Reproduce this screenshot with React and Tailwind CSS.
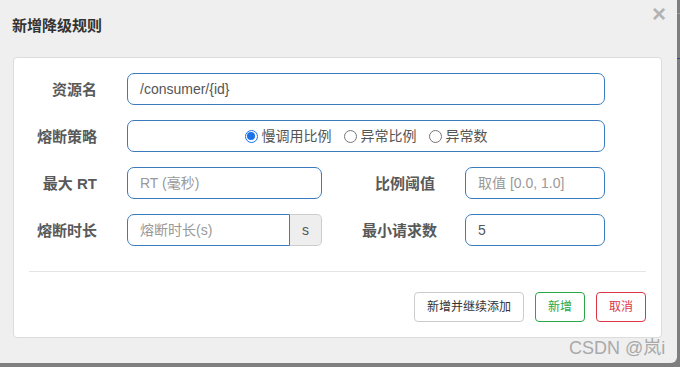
import React from 'react';

const font = { fontFamily: '"Liberation Sans", "Noto Sans CJK SC", sans-serif' };

/* ---------- little helpers ---------- */

function Label({ children, className = '' }) {
  return (
    <label className={`text-right text-[15px] font-bold text-[#595959] leading-none ${className}`}>
      {children}
    </label>
  );
}

function Input({ value, placeholder, className = '' }) {
  return (
    <div
      className={`h-[32px] border border-[#3a7cbd] rounded-[7px] px-[12px] flex items-center text-[14px] ${className}`}
    >
      {value ? (
        <span className="text-[#555]">{value}</span>
      ) : (
        <span className="text-[#999]">{placeholder}</span>
      )}
    </div>
  );
}

function Radio({ checked, children }) {
  return (
    <label className="flex items-center gap-[4px] text-[14px] text-[#555]">
      {checked ? (
        <span className="w-[13px] h-[13px] rounded-full border border-[#1a73e8] flex items-center justify-center">
          <span className="w-[8px] h-[8px] rounded-full bg-[#1a73e8]" />
        </span>
      ) : (
        <span className="w-[13px] h-[13px] rounded-full border border-[#767676] bg-white" />
      )}
      {children}
    </label>
  );
}

/* ---------- page ---------- */

export default function App() {
  return (
    <div className="w-[680px] h-[367px] bg-[#7f7f7f] relative overflow-hidden" style={font}>
      {/* bits of the page behind the overlay */}
      <div className="absolute right-0 top-[13px] w-[3px] h-px bg-[#9a9a9a]" />
      <div className="absolute right-0 top-[58px] w-[3px] h-px bg-[#2f4f78]" />

      <div className="w-[677px] h-[363px] bg-[#efefef] rounded-br-[6px] relative">
        {/* header */}
        <div className="h-[50px] flex items-center pl-[12px]">
          <h4 className="text-[15px] font-bold text-[#333] leading-none">新增降级规则</h4>
        </div>
        <button className="absolute right-[11px] top-[2px] text-[24px] font-bold leading-none text-[#b3b3b3]">
          ×
        </button>

        {/* body */}
        <div className="mt-[7px] ml-[13px] w-[649px] h-[281px] bg-white border border-[#dcdcdc] rounded-[4px] pt-[15px] px-[15px]">
          <div className="flex flex-col gap-[15px]">
            {/* 资源名 */}
            <div className="flex items-center">
              <Label className="w-[68px]">资源名</Label>
              <Input value="/consumer/{id}" className="ml-[30px] w-[478px]" />
            </div>

            {/* 熔断策略 */}
            <div className="flex items-center">
              <Label className="w-[68px]">熔断策略</Label>
              <div className="ml-[30px] w-[478px] h-[32px] border border-[#3a7cbd] rounded-[7px] flex items-center justify-center gap-[12px]">
                <Radio checked>慢调用比例</Radio>
                <Radio>异常比例</Radio>
                <Radio>异常数</Radio>
              </div>
            </div>

            {/* 最大 RT / 比例阈值 */}
            <div className="flex items-center">
              <Label className="w-[68px]">最大 RT</Label>
              <Input placeholder="RT (毫秒)" className="ml-[30px] w-[195px]" />
              <Label className="w-[113px]">比例阈值</Label>
              <Input placeholder="取值 [0.0, 1.0]" className="ml-[30px] w-[140px]" />
            </div>

            {/* 熔断时长 / 最小请求数 */}
            <div className="flex items-center">
              <Label className="w-[68px]">熔断时长</Label>
              <div className="ml-[30px] w-[195px] h-[32px] flex">
                <div className="flex-1 border border-[#3a7cbd] rounded-l-[7px] px-[12px] flex items-center text-[14px] text-[#999]">
                  熔断时长(s)
                </div>
                <div className="w-[32px] border border-l-0 border-[#ccc] bg-[#eee] rounded-r-[5px] flex items-center justify-center text-[14px] text-[#555]">
                  s
                </div>
              </div>
              <Label className="w-[115px]">最小请求数</Label>
              <Input value="5" className="ml-[28px] w-[140px]" />
            </div>
          </div>

          <div className="mt-[25px] h-px bg-[#e5e5e5]" />

          {/* footer buttons */}
          <div className="mt-[20px] flex justify-end gap-[11px]">
            <button className="h-[30px] w-[110px] border border-[#ccc] rounded-[4px] bg-white text-[12px] text-[#333]">
              新增并继续添加
            </button>
            <button className="h-[30px] w-[50px] border border-[#28a745] rounded-[4px] bg-white text-[12px] text-[#28a745]">
              新增
            </button>
            <button className="h-[30px] w-[50px] border border-[#dc3545] rounded-[4px] bg-white text-[12px] text-[#dc3545]">
              取消
            </button>
          </div>
        </div>

        {/* watermark */}
        <div className="absolute left-[569px] top-[339px] text-[18px] leading-none text-[#a9a9a9] whitespace-nowrap">
          CSDN @岚i
        </div>
      </div>
    </div>
  );
}
